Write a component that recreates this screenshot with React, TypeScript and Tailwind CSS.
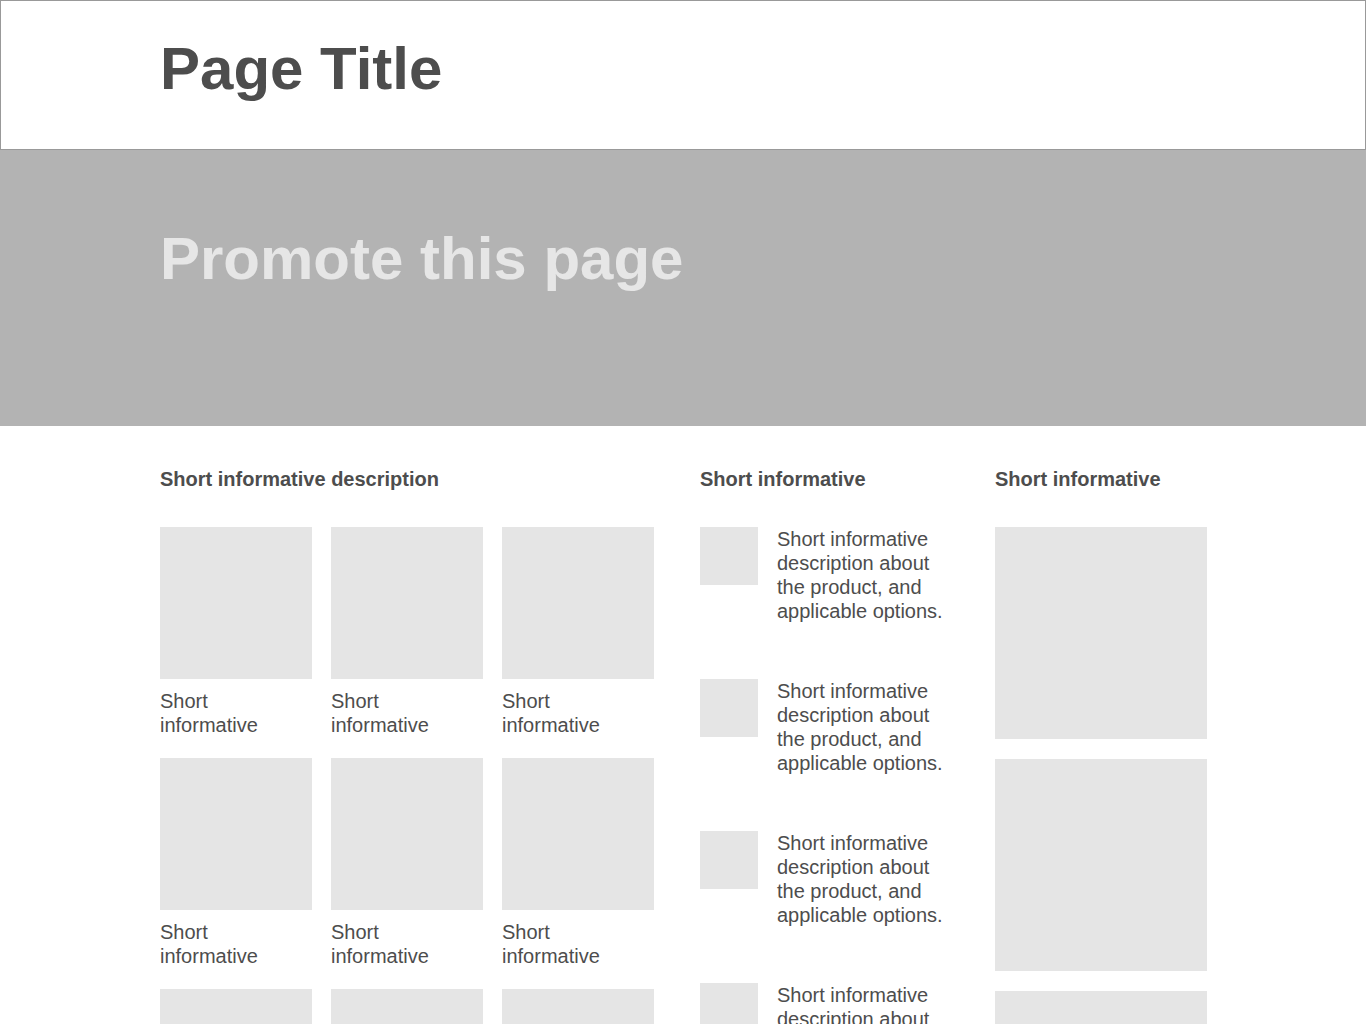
import React from "react";

const FONT = { fontFamily: '"Liberation Sans", Arial, Helvetica, sans-serif' };

const gridItems = Array.from({ length: 9 }, (_, i) => i);
const listItems = Array.from({ length: 4 }, (_, i) => i);
const tallItems = Array.from({ length: 3 }, (_, i) => i);

function SectionHeading({ children }: { children: React.ReactNode }) {
  return (
    <h2 className="text-[20px] leading-[24px] font-bold text-[#4d4d4d]">
      {children}
    </h2>
  );
}

export default function App() {
  return (
    <div className="h-[1024px] overflow-hidden bg-white" style={FONT}>
      {/* HEADER */}
      <header className="h-[150px] border border-[#999999] px-[159px] pt-[38px]">
        <h1 className="text-[60px] leading-[60px] font-bold text-[#4d4d4d]">
          Page Title
        </h1>
      </header>

      {/* HERO */}
      <section className="h-[276px] bg-[#b3b3b3] px-[160px] pt-[79px]">
        <p className="text-[60px] leading-[60px] font-bold text-[#e6e6e6]">
          Promote this page
        </p>
      </section>

      {/* CONTENT */}
      <main className="flex px-[160px] pt-[41px] text-[#4d4d4d]">
        {/* grid column */}
        <div className="w-[494px] shrink-0">
          <SectionHeading>Short informative description</SectionHeading>
          <div className="mt-[36px] grid grid-cols-[152px_152px_152px] gap-x-[19px] gap-y-[21px]">
            {gridItems.map((i) => (
              <div key={i}>
                <div className="h-[152px] w-[152px] bg-[#e5e5e5]" />
                <p className="mt-[10px] w-[130px] text-[20px] leading-[24px]">
                  Short informative
                </p>
              </div>
            ))}
          </div>
        </div>

        {/* list column */}
        <div className="ml-[46px] w-[255px] shrink-0">
          <SectionHeading>Short informative</SectionHeading>
          <div className="mt-[36px] flex flex-col gap-[56px]">
            {listItems.map((i) => (
              <div key={i} className="flex items-start gap-[19px]">
                <div className="h-[58px] w-[58px] shrink-0 bg-[#e5e5e5]" />
                <p className="w-[178px] text-[20px] leading-[24px]">
                  Short informative description about the product, and
                  applicable options.
                </p>
              </div>
            ))}
          </div>
        </div>

        {/* tall tiles column */}
        <div className="ml-[40px] w-[212px] shrink-0">
          <SectionHeading>Short informative</SectionHeading>
          <div className="mt-[36px] flex flex-col gap-[20px]">
            {tallItems.map((i) => (
              <div key={i} className="h-[212px] w-[212px] bg-[#e5e5e5]" />
            ))}
          </div>
        </div>
      </main>
    </div>
  );
}
